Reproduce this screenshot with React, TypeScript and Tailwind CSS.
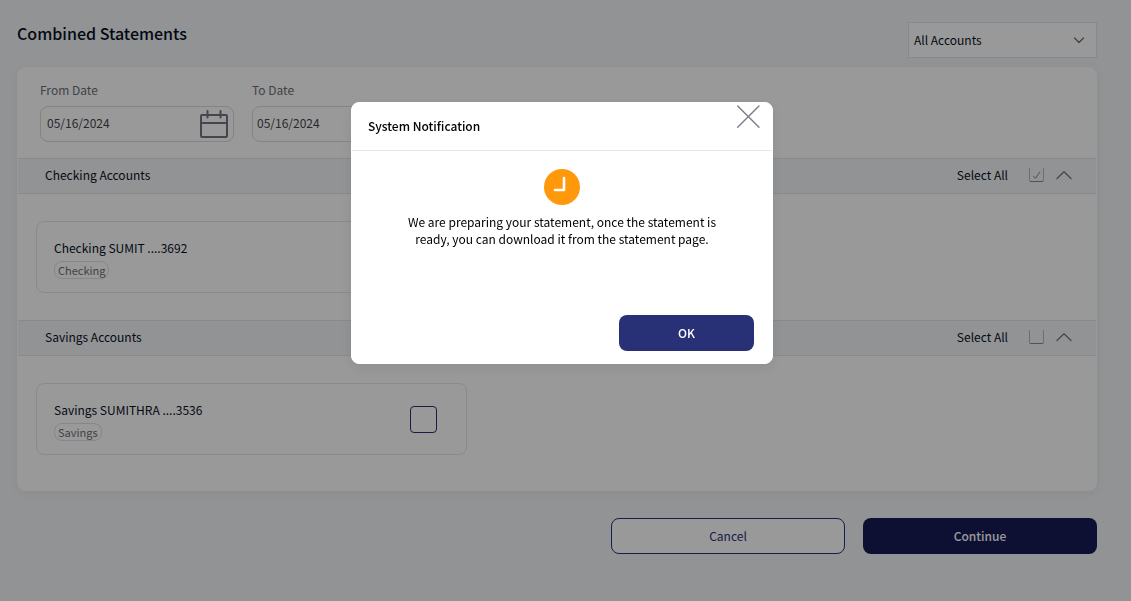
import { useState } from "react";

const CheckMark = ({ className }: { className: string }) => (
  <svg viewBox="0 0 14 14" fill="none" stroke="currentColor" strokeLinecap="round" strokeLinejoin="round" className={className}>
    <path d="M4 8.2 6 10.3 10.3 4" />
  </svg>
);

function DateField({ id, label, padding }: { id: string; label: string; padding: string }) {
  return (
    <div className="w-[194px]">
      <label htmlFor={id} className="block text-xs leading-4 text-[#6b7076]">
        {label}
      </label>
      <div className={`mt-2 flex h-9 items-center rounded-lg border border-[#dcdde0] bg-white pr-1 ${padding}`}>
        <input id={id} type="text" defaultValue="05/16/2024" className="w-full min-w-0 bg-transparent pb-0.5 text-xs leading-4 text-[#44474c] outline-none" />
        <button type="button" aria-label={`Pick ${label}`} className="shrink-0 text-[#747480]">
          <svg width="30" height="30" viewBox="0 0 30 30" fill="none" stroke="currentColor" strokeWidth="2" strokeLinecap="round" strokeLinejoin="round">
            <rect x="2" y="6" width="26" height="22" rx="1" />
            <path d="M2 14h26M8.500 2v6.500M21.500 2v6.500" />
          </svg>
        </button>
      </div>
    </div>
  );
}

type Account = { name: string; type: string };

function AccountSection({ title, account, initial }: { title: string; account: Account; initial: boolean }) {
  const [checked, setChecked] = useState(initial);
  const toggle = () => setChecked(!checked);
  return (
    <section>
      <header className="flex h-9 items-center border-y border-[#e0e5ee] bg-[#f2f5f8] pr-6 pb-0.5 pl-[27px] text-xs leading-4 text-[#07101f]">
        <h2>{title}</h2>
        <label className="ml-auto flex items-center gap-[21px]">
          Select All
          <span className="grid">
            <input type="checkbox" checked={checked} onChange={toggle} className="col-start-1 row-start-1 h-3.5 w-[15px] appearance-none rounded-b-xs border-x border-b border-x-[#b4b8bf] border-b-[#85858f] bg-transparent" />
            {checked && <CheckMark className="pointer-events-none col-start-1 row-start-1 h-3.5 w-[15px] text-[#85858f]" />}
          </span>
        </label>
        <button type="button" aria-label={`Collapse ${title}`} className="ml-3 text-[#777783]">
          <svg width="16" height="16" viewBox="0 0 16 16" fill="none" stroke="currentColor" strokeWidth="1.300" strokeLinecap="round" strokeLinejoin="round">
            <path d="M1 11.500 8 4.800 15 11.500" />
          </svg>
        </button>
      </header>
      <div className="px-[18px] pt-[27px]">
        <label className="flex h-[72px] max-w-[431px] items-center justify-between rounded-lg border border-[#e4e6ee] pr-[29px] pl-[17px]">
          <span className="flex flex-col items-start gap-1 pt-1">
            <span className="text-xs leading-[18px] text-[#07101f]">{account.name}</span>
            <span className="flex h-[18px] items-center rounded-lg border border-[#dfe2ec] px-[3px] text-[11px] leading-4 text-[#6b7076]">{account.type}</span>
          </span>
          <span className="grid">
            <input type="checkbox" checked={checked} onChange={toggle} className="col-start-1 row-start-1 size-[27px] appearance-none rounded-sm border border-[#293176] bg-white" />
            {checked && <CheckMark className="pointer-events-none col-start-1 row-start-1 size-[27px] text-[#293176]" />}
          </span>
        </label>
      </div>
    </section>
  );
}

function Notification({ onClose }: { onClose: () => void }) {
  return (
    <div className="fixed inset-0 flex items-start justify-center bg-black/40 pt-[102px] pr-[7px]">
      <div role="dialog" aria-modal="true" aria-labelledby="notice-title" className="w-[422px] rounded-lg border border-white bg-white shadow-[0_4px_14px_rgba(0,0,0,0.08)]">
        <header className="flex h-12 items-start justify-between border-b border-[#e6e8ef] pr-3 pl-4">
          <h2 id="notice-title" className="self-center pb-0.5 text-xs leading-4 font-medium text-black">
            System Notification
          </h2>
          <button type="button" aria-label="Close" onClick={onClose} className="mt-0.5 text-[#7c7c8c]">
            <svg width="24" height="24" viewBox="0 0 24 24" fill="none" stroke="currentColor" strokeWidth="1.400" strokeLinecap="round">
              <path d="M1.700 1 23 22.300M23 1 1.700 22.300" />
            </svg>
          </button>
        </header>
        <div className="flex flex-col items-center px-12 pt-[18px] text-center text-xs leading-[17px] text-black">
          <svg width="36" height="36" viewBox="0 0 36 36" fill="none">
            <circle cx="18" cy="18" r="18" fill="#ff980b" />
            <path d="M20 9v12h-9" stroke="#fff" strokeWidth="2.600" strokeLinecap="round" strokeLinejoin="round" />
          </svg>
          <p className="mt-2">
            We are preparing your statement, once the statement is ready, you can download it from the statement page.
          </p>
        </div>
        <footer className="flex justify-end pt-[68px] pr-[18px] pb-3">
          <button type="button" onClick={onClose} className="h-9 w-[135px] rounded-lg bg-[#293176] text-xs leading-4 font-medium text-white">
            OK
          </button>
        </footer>
      </div>
    </div>
  );
}

export default function App() {
  const [open, setOpen] = useState(true);
  return (
    <div className="min-h-screen bg-[#f2f5f8] pt-[22px] pr-[34px] pb-10 pl-[17px] font-['Noto_Sans_CJK_SC',sans-serif]">
      <main>
        <div className="flex items-start justify-between">
          <h1 className="text-base leading-[22px] font-medium text-[#07101f]">Combined Statements</h1>
          <div className="grid w-[189px]">
            <select aria-label="Accounts" className="col-start-1 row-start-1 h-9 w-full appearance-none border border-[#dfe4ed] bg-white pl-[5px] text-xs text-[#07101f]">
              <option>All Accounts</option>
            </select>
            <svg viewBox="0 0 12 12" fill="none" stroke="currentColor" strokeWidth="1.300" strokeLinecap="round" strokeLinejoin="round" className="pointer-events-none col-start-1 row-start-1 mr-3 size-3 self-center justify-self-end text-[#6e6e80]">
              <path d="M1.500 4 6 8.500 10.500 4" />
            </svg>
          </div>
        </div>
        <div className="mt-[9px] rounded-lg border border-white bg-white pb-[35px] shadow-[0_2px_10px_rgba(0,0,0,0.06)]">
          <div className="flex gap-[18px] px-[22px] pt-[14px] pb-4">
            <DateField id="from-date" label="From Date" padding="pl-1.5" />
            <DateField id="to-date" label="To Date" padding="pl-1" />
          </div>
          <div className="flex flex-col gap-[27px]">
            <AccountSection title="Checking Accounts" account={{ name: "Checking SUMIT ....3692", type: "Checking" }} initial={true} />
            <AccountSection title="Savings Accounts" account={{ name: "Savings SUMITHRA ....3536", type: "Savings" }} initial={false} />
          </div>
        </div>
        <div className="mt-[27px] flex justify-end gap-[18px]">
          <button type="button" className="h-9 w-[234px] rounded-lg border border-[#293176] bg-white text-xs leading-4 text-[#293176]">
            Cancel
          </button>
          <button type="button" className="h-9 w-[234px] rounded-lg bg-[#161c55] text-xs leading-4 font-medium text-white">
            Continue
          </button>
        </div>
      </main>
      {open && <Notification onClose={() => setOpen(false)} />}
    </div>
  );
}
